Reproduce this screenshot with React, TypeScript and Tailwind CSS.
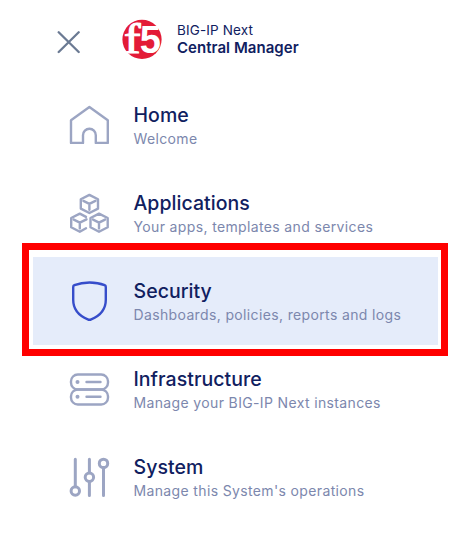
import type { ReactNode } from "react";

function Icon({ children }: { children: ReactNode }) {
  return (
    <svg
      viewBox="0 -0.7 42 42"
      className="h-[42px] w-[42px] shrink-0"
      fill="none"
      stroke="currentColor"
      strokeWidth="2.4"
      strokeLinecap="round"
      strokeLinejoin="round"
    >
      {children}
    </svg>
  );
}

function HomeIcon() {
  return (
    <Icon>
      <path d="M2 15.5 L20.4 2.4 L38.8 15.5 V38.2 H26.8 V30.5 A6.4 6.4 0 0 0 14 30.5 V38.2 H2 Z" />
    </Icon>
  );
}

function AppsIcon() {
  return (
    <Icon>
      <path d="M20.4 2.2 L29 6.6 V15.9 L20.4 20.3 L11.8 15.9 V6.6 Z M14.4 8.2 L20.4 11.2 L26.4 8.2 M20.4 11.2 V17" />
      <path d="M17 35.6 L10.8 39 L2.2 34.6 V25.3 L10.8 20.9 L17 24.2 M4.8 26.9 L10.8 29.9 L17.5 26.6 M10.8 29.9 V35.7" />
      <path d="M30 20.9 L38.7 25.3 V34.6 L30 39 L21.5 34.6 V25.3 Z M24.1 26.9 L30 29.9 L36 26.9 M30 29.9 V35.7" />
    </Icon>
  );
}

function ShieldIcon() {
  return (
    <Icon>
      <path d="M4.2 6.2 Q4.2 5 5.4 4.5 C14.5 .8 26.8 .8 35.6 4.5 Q36.8 5 36.8 6.2 V19 C36.8 28.5 32 34.6 22.2 38.6 Q20.5 39.4 18.8 38.6 C9 34.6 4.2 28.5 4.2 19 Z" />
    </Icon>
  );
}

function ServersIcon() {
  return (
    <Icon>
      <rect x="2" y="5.8" width="37" height="15" rx="6.8" />
      <rect x="2" y="20.8" width="37" height="15" rx="6.8" />
      <path d="M17.5 13.3 H31.5 M17.5 28 H31.5" />
      <g fill="currentColor" stroke="none">
        <circle cx="8.5" cy="13.3" r="2" />
        <circle cx="8.5" cy="28" r="2" />
      </g>
    </Icon>
  );
}

function SlidersIcon() {
  return (
    <Icon>
      <g strokeWidth="3">
        <path d="M6.3 2.6 V30 M20.4 2.6 V16 M20.4 25 V38.8 M34.5 11.5 V38.8" />
        <circle cx="6.3" cy="34.3" r="4.2" />
        <circle cx="20.4" cy="20.5" r="4.2" />
        <circle cx="34.5" cy="6.7" r="4.2" />
      </g>
    </Icon>
  );
}

const items = [
  { title: "Home", text: "Welcome", icon: <HomeIcon /> },
  { title: "Applications", text: "Your apps, templates and services", icon: <AppsIcon /> },
  { title: "Security", text: "Dashboards, policies, reports and logs", icon: <ShieldIcon />, active: true },
  { title: "Infrastructure", text: "Manage your BIG-IP Next instances", icon: <ServersIcon /> },
  { title: "System", text: "Manage this System's operations", icon: <SlidersIcon /> },
];

export default function App() {
  return (
    <div className="h-[533px] w-[466px] overflow-hidden bg-white font-['Inter',sans-serif] text-[#10205f]">
      <header className="flex h-[81px] items-start pl-[57px] pt-[19px]">
        <button aria-label="Close" className="mt-[12px] h-[24px] w-[24px] text-[#6b7a93]">
          <svg viewBox="0 0 24 24" className="h-6 w-6" stroke="currentColor" strokeWidth="2.3" strokeLinecap="round">
            <path d="M1.7 1.3 L21.7 21 M21.7 1.3 L1.7 21" />
          </svg>
        </button>
        <svg viewBox="0 0 40 40" className="ml-[41px] h-[40px] w-[40px] overflow-visible">
          <circle cx="20" cy="20.4" r="19.6" fill="#e31b37" />
          <text transform="translate(2 34) scale(1.15 1)" fontSize="43" fill="white" stroke="white" strokeWidth="1.2" fontFamily="Liberation Serif, serif">f</text>
          <text transform="translate(17.8 33.8) scale(1 1)" fontSize="38" fontWeight="700" fill="white" fontFamily="Liberation Sans, sans-serif">5</text>
        </svg>
        <div className="ml-[15px] mt-[3px]">
          <div className="text-[13.5px] leading-[17px] tracking-[0.14px]">BIG-IP Next</div>
          <div className="text-[15px] font-semibold leading-[17px] tracking-[0.05px]">Central Manager</div>
        </div>
      </header>
      <nav className="ml-[33px] w-[405px]">
        {items.map((item) => (
          <div
            key={item.title}
            className={`relative flex h-[88px] pl-[36px] pt-[23px] ${item.active ? "bg-[#e5ecfa] text-[#364dca]" : "text-[#9ca5c3]"}`}
          >
            {item.icon}
            <div className="ml-[22.5px] whitespace-nowrap">
              <div className="-mt-px text-[19.5px] font-medium leading-[24px] tracking-[0.04px] text-[#10205f]">{item.title}</div>
              <div className="mt-px text-[14px] leading-[22px] tracking-[0.36px] text-[#7c87ad]">{item.text}</div>
            </div>
            {item.active && (
              <div className="pointer-events-none absolute -bottom-[11px] -left-[11px] -right-[10px] -top-[14px] border-[7px] border-[#ff0000]" />
            )}
          </div>
        ))}
      </nav>
    </div>
  );
}
